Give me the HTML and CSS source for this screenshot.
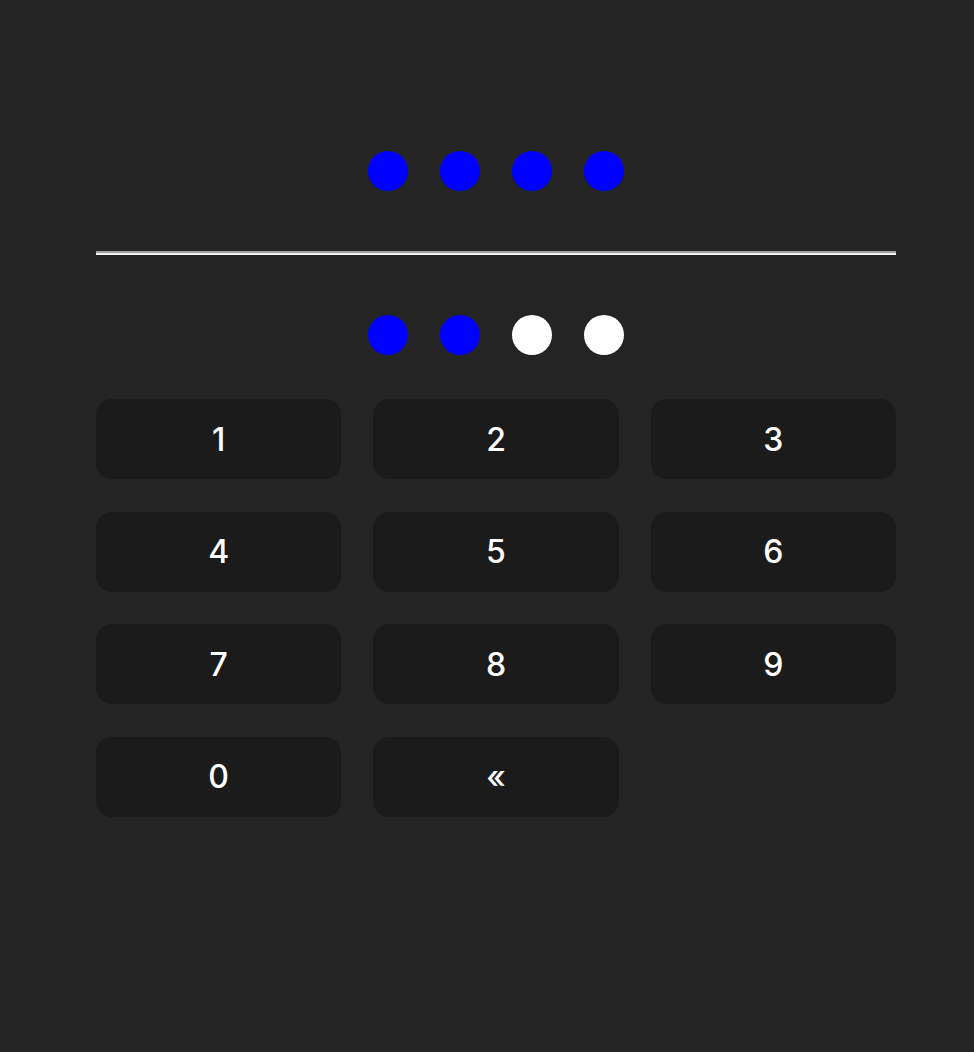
FILE: index.html
```html
<!DOCTYPE html>
<html>
<head>
<meta charset="utf-8">
<link rel="stylesheet" href="styles.css">
</head>
<body>
<main class="pin">
  <div class="dots">
    <span class="dot dot-on"></span>
    <span class="dot dot-on"></span>
    <span class="dot dot-on"></span>
    <span class="dot dot-on"></span>
  </div>
  <div class="divider"></div>
  <div class="dots dots-entry">
    <span class="dot dot-on"></span>
    <span class="dot dot-on"></span>
    <span class="dot dot-off"></span>
    <span class="dot dot-off"></span>
  </div>
  <div class="keypad">
    <button class="key">1</button>
    <button class="key">2</button>
    <button class="key">3</button>
    <button class="key">4</button>
    <button class="key">5</button>
    <button class="key">6</button>
    <button class="key">7</button>
    <button class="key">8</button>
    <button class="key">9</button>
    <button class="key">0</button>
    <button class="key">«</button>
  </div>
</main>
</body>
</html>
```
FILE: styles.css
```css
html, body {
  margin: 0;
  padding: 0;
  background: #242424;
  height: 100%;
}
body {
  font-family: Inter, "Liberation Sans", sans-serif;
}
.pin {
  width: 800px;
  margin-left: 96px;
  padding-top: 151px;
  display: flex;
  flex-direction: column;
}
.dots {
  display: flex;
  justify-content: center;
  gap: 32px;
}
.dots-entry {
  margin-top: 60px;
}
.dot {
  width: 40px;
  height: 40px;
  border-radius: 50%;
}
.dot-on {
  background: #0000ff;
}
.dot-off {
  background: #ffffff;
}
.divider {
  margin-top: 60px;
  height: 0;
  border-top: 2px solid #9e9e9e;
  border-bottom: 2px solid #f0f0f0;
}
.keypad {
  margin-top: 44px;
  display: grid;
  grid-template-columns: repeat(3, 1fr);
  gap: 32px;
  row-gap: 32.5px;
}
.key {
  height: 80px;
  border: none;
  border-radius: 16px;
  background: #1b1b1b;
  color: #ffffff;
  font-family: Inter, "Liberation Sans", sans-serif;
  font-size: 32px;
  font-weight: 500;
  display: flex;
  align-items: center;
  justify-content: center;
  padding: 0;
}
```
